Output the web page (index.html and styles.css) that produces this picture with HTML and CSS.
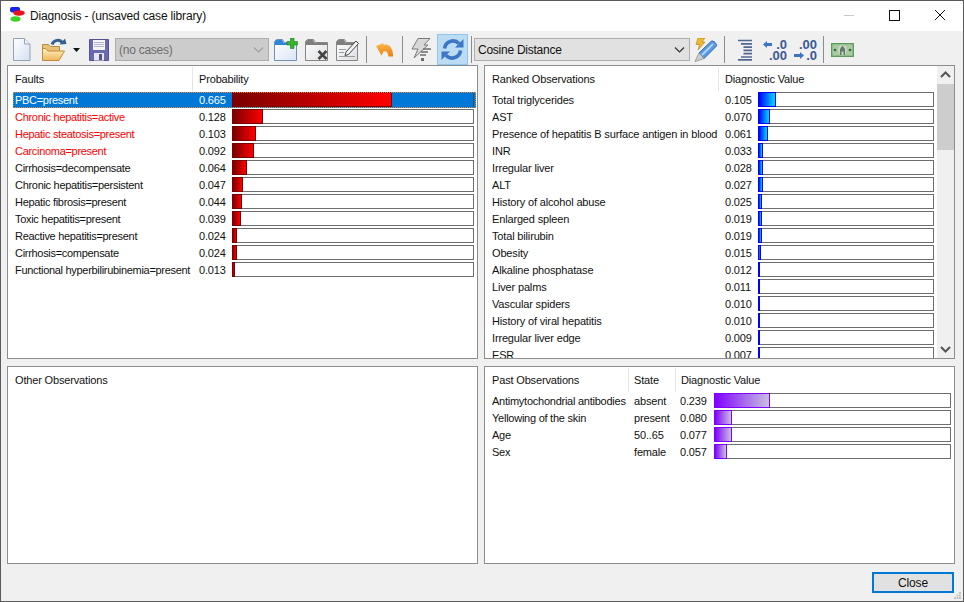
FILE: index.html
```html
<!DOCTYPE html>
<html lang="en">
<head>
<meta charset="utf-8">
<title>Diagnosis</title>
<link rel="stylesheet" href="styles.css">
</head>
<body>
<div class="window">
  <header class="titlebar">
    <svg class="app-icon" width="16" height="16" viewBox="0 0 16 16"><ellipse cx="5.500" cy="12" rx="5" ry="2.800" fill="#3fd02a"/><rect x="0" y="0" width="10" height="5.500" rx="2" fill="#1a22e8"/><ellipse cx="9" cy="6" rx="5.800" ry="2.700" fill="#e8141c"/></svg>
    <span class="title">Diagnosis - (unsaved case library)</span>
    <span class="controls">
      <svg class="ctl" width="46" height="30" viewBox="0 0 46 30"><path d="M19 14.500h10" stroke="#c9c9c9"/></svg>
      <svg class="ctl" width="46" height="30" viewBox="0 0 46 30"><rect x="18.500" y="9.500" width="10" height="10" fill="none" stroke="#111"/></svg>
      <svg class="ctl" width="46" height="30" viewBox="0 0 46 30"><path d="M18 9l10 10M28 9L18 19" stroke="#111" fill="none"/></svg>
    </span>
  </header>

  <nav class="toolbar">
    <svg class="i-new" width="18" height="23" viewBox="0 0 18 23"><defs><linearGradient id="pg" x1="0" y1="0" x2="1" y2="1"><stop offset="0" stop-color="#fff"/><stop offset="1" stop-color="#d5e0f2"/></linearGradient></defs><path d="M.5.5h11l5.500 5.500v16.500H.5z" fill="url(#pg)" stroke="#93a2b8"/><path d="M11.500.5v5.500H17" fill="#eef2f8" stroke="#93a2b8"/></svg>
    <svg class="i-open" width="25" height="23" viewBox="0 0 25 23"><defs><linearGradient id="fo" x1="0" y1="0" x2="0" y2="1"><stop offset="0" stop-color="#fff3c4"/><stop offset="1" stop-color="#f0b55a"/></linearGradient></defs><path d="M.5 6.500h6l2 2h9v5H.5z" fill="#e9c27a" stroke="#b98a3c"/><path d="M.5 22.500V10.500h3L6 13h16.500L17 22.500z" fill="url(#fo)" stroke="#bd8a3e"/><path d="M10 6.500C12 1.500 18 1 20.500 5" fill="none" stroke="#33608f" stroke-width="3"/><path d="M17.500 6.500l7-.5-1.500-5.500z" fill="#33608f"/></svg>
    <svg class="i-arrow" width="7" height="4" viewBox="0 0 7 4"><path d="M0 0h7L3.500 4z" fill="#111"/></svg>
    <svg class="i-save" width="20" height="22" viewBox="0 0 20 22"><path d="M.5.500h19v21H.5z" fill="#6a68ae" stroke="#54528f"/><rect x="4" y="1" width="12" height="10" fill="#f5f5fa"/><path d="M5 3.500h10M5 5.500h10M5 7.500h10" stroke="#b4b4cc"/><rect x="5" y="14" width="10" height="7.500" fill="#e6e6ee"/><rect x="10" y="15" width="3" height="6" fill="#54528f"/></svg>
    <div class="combo combo-off"><span>(no cases)</span><svg width="11" height="6" viewBox="0 0 11 6"><path d="M1 .5l4.500 4.500L10 .5" fill="none" stroke="#a2a2a2" stroke-width="1.200"/></svg></div>
    <svg class="i-add" width="24" height="23" viewBox="0 0 24 23"><defs><linearGradient id="fb" x1="0" y1="0" x2="1" y2="1"><stop offset="0" stop-color="#fff"/><stop offset="1" stop-color="#d9e5f5"/></linearGradient></defs><path d="M.5 22.500V3.500l2-2h6l2 3h12v18z" fill="url(#fb)" stroke="#7590b6"/><path d="M1 7V3.500l1.500-1.500h5.500l2 3h8v2z" fill="#2b86dc"/><path d="M16.500 0h3.500v3.500h3.500V7H20v3.500h-3.500V7H13V3.500h3.500z" fill="#35b52e" stroke="#1b7a1c" stroke-width=".6"/></svg>
    <svg class="i-del" width="24" height="23" viewBox="0 0 24 23"><defs><linearGradient id="fg" x1="0" y1="0" x2="1" y2="1"><stop offset="0" stop-color="#fff"/><stop offset="1" stop-color="#dcdfe3"/></linearGradient></defs><path d="M.5 22.500V3.500l2-2h6l2 3h12v18z" fill="url(#fg)" stroke="#868686"/><path d="M1 7V3.500l1.500-1.500h5.500l2 3h12v2z" fill="#7e7e7e"/><path d="M13.500 13l8 8M21.500 13l-8 8" stroke="#444" stroke-width="2.600"/></svg>
    <svg class="i-edit" width="23" height="23" viewBox="0 0 23 23"><path d="M.5 22.500V3.500l2-2h6l2 3h11v18z" fill="url(#fg)" stroke="#868686"/><path d="M1 7V3.500l1.500-1.500h5.500l2 3h11v2z" fill="#7e7e7e"/><path d="M3 11.500h7M3 14.500h5M3 18.500h16" stroke="#9c9c9c"/><path d="M10 14l10-11 2.500 2.500L12.500 16.500l-3.500 1z" fill="#f4f4f4" stroke="#444"/></svg>
    <span class="sep sep-a"></span>
    <svg class="i-undo" width="17" height="14" viewBox="0 0 17 14"><defs><linearGradient id="ug" x1="0" y1="0" x2="0" y2="1"><stop offset="0" stop-color="#fbb84c"/><stop offset="1" stop-color="#ee7d12"/></linearGradient></defs><path d="M0 3l5.500 9.500L7.500 8.500C10 7.500 12 9 12.500 13.500H17C17.500 6 13 0 8 2L7 .3z" fill="url(#ug)"/></svg>
    <span class="sep sep-b"></span>
    <svg class="i-flash" width="20" height="24" viewBox="0 0 20 24"><path d="M7 .5h12L13 7h4L3 20l4-9H1z" fill="#d8d8d8" stroke="#7a7a7a"/><path d="M12 11h8M10 14h7M9 17h6" stroke="#6c6c6c" stroke-width="1.300"/><rect x="10" y="20" width="3" height="3" fill="#6c6c6c"/></svg>
    <div class="btn-on"><svg width="23" height="23" viewBox="0 0 23 23"><path d="M3.500 10.500a8.500 8.500 0 0 1 14.500-5" fill="none" stroke="#3d76c6" stroke-width="3.600"/><path d="M14 9.500h8.500V1z" fill="#3d76c6"/><path d="M19.500 12.500a8.500 8.500 0 0 1-14.500 5" fill="none" stroke="#3d76c6" stroke-width="3.600"/><path d="M9 13.500H.5V22z" fill="#3d76c6"/></svg></div>
    <span class="sep sep-c"></span>
    <div class="combo combo-on"><span>Cosine Distance</span><svg width="11" height="6" viewBox="0 0 11 6"><path d="M1 .5l4.500 4.500L10 .5" fill="none" stroke="#333" stroke-width="1.200"/></svg></div>
    <svg class="i-pencil" width="24" height="24" viewBox="0 0 24 24"><path d="M5 15L17 3.500c2-2 7 3 5 5L10 20.500z" fill="#5a9ce8" stroke="#2d64ad"/><path d="M8 17L19 6" stroke="#c3e0fb" stroke-width="1.600"/><path d="M5 15l5 5.500-9 3z" fill="#d0d0d0" stroke="#8a8a8a" stroke-width=".8"/><path d="M4 0h7L8 4h3l-7 8 1.500-5.500H2z" fill="#f1b72f" stroke="#b27f12" stroke-width=".6"/></svg>
    <span class="sep sep-d"></span>
    <svg class="i-indent" width="14" height="22" viewBox="0 0 14 22"><path d="M0 1.500h14M3 4.800h11M5.500 8.100h8.500M5.500 11.400h8.500M5.500 14.700h8.500M3 18h11M0 20.800h14" stroke="#50688f" stroke-width="1.700"/></svg>
    <div class="digits i-dec">
      <div class="dg-line"><svg width="9" height="7" viewBox="0 0 9 7"><path d="M0 3.500L4 0v2h5v3H4v2z" fill="#3d74c4"/></svg><span>.0</span></div>
      <div class="dg-line dg-end"><span>.00</span></div>
    </div>
    <div class="digits i-inc">
      <div class="dg-line dg-end"><span>.00</span></div>
      <div class="dg-line"><svg width="10" height="7" viewBox="0 0 10 7"><path d="M10 3.500L6 0v2H0v3h6v2z" fill="#3d74c4"/></svg><span>.0</span></div>
    </div>
    <span class="sep sep-e"></span>
    <svg class="i-money" width="23" height="14" viewBox="0 0 23 14"><rect width="23" height="14" fill="#5e9a5c"/><rect x="1.300" y="1.300" width="20.400" height="11.400" fill="#a6c9a0"/><ellipse cx="11.500" cy="7" rx="4.500" ry="5.200" fill="#c6d8c2"/><path d="M9 12V6l2.500-3.500L14 6v6h-1.500V8.500h-2V12z" fill="#67766a"/><circle cx="4" cy="7" r="1.300" fill="#39653a"/><circle cx="19" cy="7" r="1.300" fill="#39653a"/></svg>
  </nav>

  <main class="panels">
    <section class="panel">
      <div class="pane">
        <div class="head head-faults"><span class="h-name">Faults</span><span class="h-last">Probability</span></div>
        <div class="rows rows-faults">
          <div class="row selected"><span class="name">PBC=present</span><span class="val">0.665</span><span class="bar"><i class="fill red" style="width:160px"></i></span></div>
          <div class="row alert"><span class="name">Chronic hepatitis=active</span><span class="val">0.128</span><span class="bar"><i class="fill red" style="width:31px"></i></span></div>
          <div class="row alert"><span class="name">Hepatic steatosis=present</span><span class="val">0.103</span><span class="bar"><i class="fill red" style="width:24px"></i></span></div>
          <div class="row alert"><span class="name">Carcinoma=present</span><span class="val">0.092</span><span class="bar"><i class="fill red" style="width:22px"></i></span></div>
          <div class="row"><span class="name">Cirrhosis=decompensate</span><span class="val">0.064</span><span class="bar"><i class="fill red" style="width:15px"></i></span></div>
          <div class="row"><span class="name">Chronic hepatitis=persistent</span><span class="val">0.047</span><span class="bar"><i class="fill red" style="width:11px"></i></span></div>
          <div class="row"><span class="name">Hepatic fibrosis=present</span><span class="val">0.044</span><span class="bar"><i class="fill red" style="width:10px"></i></span></div>
          <div class="row"><span class="name">Toxic hepatitis=present</span><span class="val">0.039</span><span class="bar"><i class="fill red" style="width:9px"></i></span></div>
          <div class="row"><span class="name">Reactive hepatitis=present</span><span class="val">0.024</span><span class="bar"><i class="fill red" style="width:5px"></i></span></div>
          <div class="row"><span class="name">Cirrhosis=compensate</span><span class="val">0.024</span><span class="bar"><i class="fill red" style="width:5px"></i></span></div>
          <div class="row"><span class="name">Functional hyperbilirubinemia=present</span><span class="val">0.013</span><span class="bar"><i class="fill red" style="width:3px"></i></span></div>
        </div>
      </div>
    </section>

    <section class="panel panel-scroll">
      <div class="pane">
        <div class="head head-ranked"><span class="h-name">Ranked Observations</span><span class="h-last">Diagnostic Value</span></div>
        <div class="rows rows-ranked">
          <div class="row"><span class="name">Total triglycerides</span><span class="val">0.105</span><span class="bar"><i class="fill blue" style="width:18px"></i></span></div>
          <div class="row"><span class="name">AST</span><span class="val">0.070</span><span class="bar"><i class="fill blue" style="width:12px"></i></span></div>
          <div class="row"><span class="name">Presence of hepatitis B surface antigen in blood</span><span class="val">0.061</span><span class="bar"><i class="fill blue" style="width:10px"></i></span></div>
          <div class="row"><span class="name">INR</span><span class="val">0.033</span><span class="bar"><i class="fill blue" style="width:5px"></i></span></div>
          <div class="row"><span class="name">Irregular liver</span><span class="val">0.028</span><span class="bar"><i class="fill blue" style="width:5px"></i></span></div>
          <div class="row"><span class="name">ALT</span><span class="val">0.027</span><span class="bar"><i class="fill blue" style="width:5px"></i></span></div>
          <div class="row"><span class="name">History of alcohol abuse</span><span class="val">0.025</span><span class="bar"><i class="fill blue" style="width:4px"></i></span></div>
          <div class="row"><span class="name">Enlarged spleen</span><span class="val">0.019</span><span class="bar"><i class="fill blue" style="width:4px"></i></span></div>
          <div class="row"><span class="name">Total bilirubin</span><span class="val">0.019</span><span class="bar"><i class="fill blue" style="width:4px"></i></span></div>
          <div class="row"><span class="name">Obesity</span><span class="val">0.015</span><span class="bar"><i class="fill blue" style="width:3px"></i></span></div>
          <div class="row"><span class="name">Alkaline phosphatase</span><span class="val">0.012</span><span class="bar"><i class="fill blue" style="width:2px"></i></span></div>
          <div class="row"><span class="name">Liver palms</span><span class="val">0.011</span><span class="bar"><i class="fill blue" style="width:1px"></i></span></div>
          <div class="row"><span class="name">Vascular spiders</span><span class="val">0.010</span><span class="bar"><i class="fill blue" style="width:1px"></i></span></div>
          <div class="row"><span class="name">History of viral hepatitis</span><span class="val">0.010</span><span class="bar"><i class="fill blue" style="width:1px"></i></span></div>
          <div class="row"><span class="name">Irregular liver edge</span><span class="val">0.009</span><span class="bar"><i class="fill blue" style="width:1px"></i></span></div>
          <div class="row"><span class="name">ESR</span><span class="val">0.007</span><span class="bar"><i class="fill blue" style="width:1px"></i></span></div>
        </div>
      </div>
      <div class="scrollbar">
        <svg class="sb-btn" width="17" height="18" viewBox="0 0 17 18"><path d="M4 11l4.500-4.500L13 11" fill="none" stroke="#555" stroke-width="2"/></svg>
        <div class="sb-thumb"></div>
        <div class="sb-track"></div>
        <svg class="sb-btn" width="17" height="17" viewBox="0 0 17 17"><path d="M4 6l4.500 4.500L13 6" fill="none" stroke="#555" stroke-width="2"/></svg>
      </div>
    </section>

    <section class="panel">
      <div class="pane">
        <div class="head head-other"><span class="h-name">Other Observations</span></div>
      </div>
    </section>

    <section class="panel">
      <div class="pane">
        <div class="head head-past"><span class="h-name">Past Observations</span><span class="h-state">State</span><span class="h-last">Diagnostic Value</span></div>
        <div class="rows rows-past">
          <div class="row"><span class="name">Antimytochondrial antibodies</span><span class="state">absent</span><span class="val">0.239</span><span class="bar"><i class="fill purple" style="width:56px"></i></span></div>
          <div class="row"><span class="name">Yellowing of the skin</span><span class="state">present</span><span class="val">0.080</span><span class="bar"><i class="fill purple" style="width:18px"></i></span></div>
          <div class="row"><span class="name">Age</span><span class="state">50..65</span><span class="val">0.077</span><span class="bar"><i class="fill purple" style="width:18px"></i></span></div>
          <div class="row"><span class="name">Sex</span><span class="state">female</span><span class="val">0.057</span><span class="bar"><i class="fill purple" style="width:13px"></i></span></div>
        </div>
      </div>
    </section>
  </main>

  <footer class="footer">
    <button class="close" type="button">Close</button>
    <svg class="grip" width="7" height="7" viewBox="0 0 7 7"><path d="M5 0h2v2H5zM2.500 2.500h2v2h-2zM5 2.500h2v2H5zM0 5h2v2H0zM2.500 5h2v2h-2zM5 5h2v2H5z" fill="#c4c4c4"/></svg>
  </footer>
</div>
</body>
</html>
```
FILE: styles.css
```css
* { box-sizing: border-box; }
html, body { margin: 0; padding: 0; }
body {
  width: 964px;
  height: 602px;
  overflow: hidden;
  font-family: "Liberation Sans", Arial, sans-serif;
  font-size: 11px;
  letter-spacing: -0.16px;
  color: #111;
  background: #f0f0f0;
}
.window {
  width: 964px;
  height: 602px;
  border: 1px solid #5a5a5a;
  display: flex;
  flex-direction: column;
  background: #f0f0f0;
}

/* title bar */
.titlebar {
  height: 30px;
  flex: none;
  background: #fff;
  display: flex;
  align-items: center;
  padding-left: 9px;
}
.app-icon { flex: none; margin-right: 4px; margin-bottom: 2px; }
.title { font-size: 12px; flex: 1; }
.controls { display: flex; }
.ctl { display: block; }

/* toolbar */
.toolbar {
  height: 34px;
  flex: none;
  display: flex;
  align-items: center;
  padding: 3px 0 0 12px;
}
.toolbar svg { flex: none; display: block; }
.i-new { margin-right: 11px; }
.i-open { margin-right: 6px; }
.i-arrow { margin-right: 9px; }
.i-save { margin-right: 6px; }
.combo {
  height: 23px;
  display: flex;
  align-items: center;
  justify-content: space-between;
  padding: 0 4px 0 3px;
  font-size: 12px;
  letter-spacing: -0.25px;
  border: 1px solid #adadad;
  flex: none;
}
.combo-off { width: 154px; background: #cccccc; color: #6d6d6d; margin-right: 5px; }
.combo-on { width: 216px; background: #e1e1e1; color: #111; margin-right: 4px; }
.i-add { margin-right: 7px; }
.i-del { margin-right: 7px; }
.i-edit { margin-right: 7px; }
.sep { flex: none; width: 1px; height: 27px; background: #8c8c8c; }
.sep-a { margin-right: 9px; }
.i-undo { margin-right: 9px; }
.sep-b { margin-right: 8px; }
.i-flash { margin-right: 6px; }
.btn-on {
  flex: none;
  width: 31px;
  height: 31px;
  background: #bcdcf4;
  border: 1px solid #8fc5ee;
  display: flex;
  align-items: center;
  justify-content: center;
  margin-right: 3px;
}
.sep-c { margin-right: 2px; }
.i-pencil { margin-right: 6px; }
.sep-d { margin-right: 13px; }
.i-indent { margin-right: 11px; }
.digits {
  flex: none;
  height: 22px;
  display: grid;
  grid-template-rows: 11px 11px;
  font-size: 13px;
  font-weight: 700;
  line-height: 11px;
  letter-spacing: 0;
  color: #3b5a96;
}
.dg-line { display: flex; align-items: center; justify-content: space-between; }
.dg-line span { display: block; height: 11px; }
.dg-end { justify-content: flex-end; }
.i-dec { width: 24px; margin-right: 7px; }
.i-inc { width: 23px; margin-right: 6px; }
.sep-e { margin-right: 7px; }

/* panels */
.panels {
  flex: none;
  height: 499px;
  display: grid;
  grid-template-columns: 471px 471px;
  grid-template-rows: 294px 198px;
  column-gap: 6px;
  row-gap: 7px;
  padding-left: 6px;
}
.panel {
  border: 1px solid #8d8d8d;
  background: #fff;
  overflow: hidden;
  display: flex;
}
.pane { flex: 1; min-width: 0; overflow: hidden; }
.head {
  height: 26px;
  display: grid;
  align-items: center;
  padding-bottom: 1px;
}
.head span { height: 24px; line-height: 24px; padding-left: 6px; border-right: 1px solid #e5e5e5; }
.head .h-name { padding-left: 7px; }
.head .h-last { border-right: 0; }
.head-faults { grid-template-columns: 185px 1fr; }
.head-ranked { grid-template-columns: 234px 1fr; }
.head-other { grid-template-columns: 1fr; }
.head-other span { border-right: 0; }
.head-past { grid-template-columns: 144px 47px 1fr; }
.head-past .h-state, .head-past .h-last { padding-left: 5px; }

.rows { overflow: hidden; }
.row { height: 17px; display: flex; line-height: 16px; white-space: nowrap; }
.name { flex: none; overflow: hidden; }
.val { flex: none; }
.state { flex: none; width: 46px; }
.bar {
  flex: 1;
  height: 15px;
  border: 1px solid #6d6d6d;
  background: #fff;
  display: block;
}
.fill {
  display: block;
  height: 15px;
  margin: -1px 0 0 -1px;
  border: 1px solid;
}
.red { border-color: #7d0000; background: linear-gradient(90deg, #7a0000, #ff0000); }
.blue { border-color: #0000ff; background: linear-gradient(90deg, #0000ff, #00ddff); }
.purple { border-color: #8000ff; background: linear-gradient(90deg, #8000ff, #c8c0e0); }

.rows-faults .row { margin-left: 5px; width: 463px; padding-left: 2px; padding-right: 2px; }
.rows-faults .name { width: 184px; letter-spacing: -0.3px; }
.rows-faults .val { width: 33px; }
.row.alert .name { color: #ff0000; }
.row.selected {
  background: #0078d7;
  color: #fff;
  outline: 1px dotted #e8873a;
  outline-offset: -1px;
  height: 16px;
  margin-bottom: 1px;
}
.row.selected .bar { background: #0078d7; border-color: #0078d7; border-right-color: #33506b; }

.rows-ranked .row { padding-left: 7px; padding-right: 3px; }
.rows-ranked .name { width: 233px; }
.rows-ranked .val { width: 33px; }
.rows-past .row { padding-left: 7px; padding-right: 3px; }
.rows-past .name { width: 142px; letter-spacing: -0.25px; }
.rows-past .val { width: 34px; }

/* scrollbar */
.scrollbar { flex: none; width: 17px; background: #f0f0f0; display: flex; flex-direction: column; }
.sb-btn { display: block; flex: none; }
.sb-thumb { flex: none; height: 66px; background: #cdcdcd; }
.sb-track { flex: 1; }

/* footer */
.footer {
  flex: 1;
  display: flex;
  position: relative;
  justify-content: flex-end;
  padding: 8px 9px 0 0;
}
.close {
  width: 82px;
  height: 21px;
  padding: 0;
  background: #e1e1e1;
  border: 2px solid #0078d7;
  font: 12px "Liberation Sans", Arial, sans-serif;
  letter-spacing: -0.16px;
  color: #111;
}
.grip { position: absolute; right: 2px; bottom: 2px; }
```
